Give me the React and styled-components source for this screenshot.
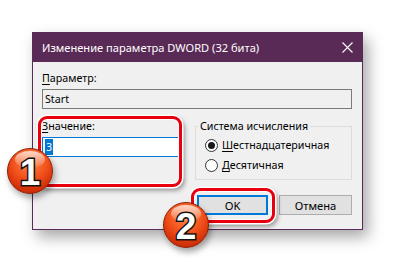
import React from "react";
import styled, { createGlobalStyle } from "styled-components";

const Global = createGlobalStyle`
  html, body { margin: 0; padding: 0; background: #fff; }
  body { font-family: "Segoe UI", "Noto Sans", "Liberation Sans", sans-serif; }
  * { box-sizing: border-box; }
`;

const Page = styled.div`
  position: relative;
  width: 395px;
  height: 262px;
  overflow: hidden;
  padding: 32px 0 0 32px;
  background: #fff;
`;

const Dialog = styled.div`
  width: 331px;
  height: 198px;
  border: 1px solid #5b2b57;
  background: #f0f0f0;
  box-shadow: 5px 7px 14px rgba(0, 0, 0, 0.35);
  display: flex;
  flex-direction: column;
  font-size: 10.7px;
  color: #000;
`;

const TitleBar = styled.div`
  height: 29px;
  flex: none;
  background: #5a2a56;
  color: #fff;
  display: flex;
  align-items: center;
  justify-content: space-between;
  padding-left: 9px;
  font-size: 11.1px;
`;

const CloseBtn = styled.div`
  width: 30px;
  height: 29px;
  display: flex;
  align-items: center;
  justify-content: center;
`;

const Body = styled.div`
  padding: 9px 10px 0 9px;
  display: flex;
  flex-direction: column;
`;

const Label = styled.div`
  line-height: 15px;
  height: 15px;
  white-space: nowrap;
`;

const U = styled.span`
  text-decoration: underline;
  text-underline-offset: 2px;
`;

const Field = styled.div`
  margin-top: 3px;
  height: 20px;
  border: 1px solid ${(p) => (p.$focused ? "#0078d7" : "#7a7a7a")};
  background: ${(p) => (p.$readonly ? "#f0f0f0" : "#fff")};
  display: flex;
  align-items: center;
  padding-left: 2px;
  line-height: 16px;
`;

const Selected = styled.span`
  background: #0078d7;
  color: #fff;
  padding: 0 1px;
  line-height: 16px;
`;

const Row = styled.div`
  margin-top: 10px;
  display: flex;
  gap: 16px;
`;

const ValueCol = styled.div`
  position: relative;
  width: 137px;
  flex: none;
`;

const Ring = styled.div`
  position: absolute;
  top: ${(p) => p.$t}px;
  left: ${(p) => p.$l}px;
  right: ${(p) => p.$r}px;
  bottom: ${(p) => p.$b}px;
  border: 3px solid #e8000f;
  border-radius: 9px;
  box-shadow: 0 0 0 1.5px #fff, inset 0 0 0 1px #fff, 2px 3px 4px 1px rgba(0, 0, 0, 0.35);
  pointer-events: none;
`;

const Group = styled.fieldset`
  margin: 0;
  padding: 5px 0 6px 9px;
  width: 157px;
  height: 61px;
  border: 1px solid #dcdcdc;
  display: flex;
  flex-direction: column;
  gap: 7px;
`;

const Legend = styled.legend`
  padding: 0 2px;
  margin-left: -7px;
  line-height: 15px;
`;

const RadioRow = styled.div`
  display: flex;
  align-items: center;
  gap: 4px;
  height: 13px;
  line-height: 15px;
`;

const RadioCircle = styled.span`
  width: 13px;
  height: 13px;
  border-radius: 50%;
  border: 1px solid #333;
  background: #fff;
  display: flex;
  align-items: center;
  justify-content: center;
  &::after {
    content: "";
    width: 7px;
    height: 7px;
    border-radius: 50%;
    background: ${(p) => (p.$checked ? "#1a1a1a" : "transparent")};
  }
`;

const Buttons = styled.div`
  margin-top: 15px;
  display: flex;
  justify-content: flex-end;
  gap: 11px;
`;

const BtnWrap = styled.div`
  position: relative;
`;

const Button = styled.div`
  width: ${(p) => p.$w}px;
  height: 20px;
  background: #e1e1e1;
  border: ${(p) => (p.$default ? "2px solid #0078d7" : "1px solid #adadad")};
  display: flex;
  align-items: center;
  justify-content: center;
  font-size: 11.2px;
`;

const Badge = styled.div`
  position: absolute;
  left: ${(p) => p.$x}px;
  top: ${(p) => p.$y}px;
  width: 46px;
  height: 46px;
  border-radius: 50%;
  border: 1px solid #8a1d02;
  background: radial-gradient(circle at 50% 30%, #ff8a4a 0%, #f2511b 45%, #d8340b 70%, #a8220a 100%);
  box-shadow: 2px 4px 6px rgba(0, 0, 0, 0.35);
  display: flex;
  align-items: center;
  justify-content: center;
  overflow: hidden;
  &::before {
    content: "";
    position: absolute;
    left: 7px;
    top: 2px;
    width: 30px;
    height: 17px;
    border-radius: 50%;
    background: linear-gradient(to bottom, rgba(255, 255, 255, 0.75), rgba(255, 255, 255, 0.05));
  }
`;

const BadgeNum = styled.span`
  position: relative;
  font-family: "Liberation Sans", Arial, sans-serif;
  font-weight: 700;
  font-size: 37px;
  line-height: 1;
  color: #fff;
  -webkit-text-stroke: 3px #111;
  paint-order: stroke fill;
  margin-top: 2px;
`;

export default function App() {
  return (
    <>
      <Global />
      <Page>
        <Dialog>
          <TitleBar>
            <span>Изменение параметра DWORD (32 бита)</span>
            <CloseBtn>
              <svg width="11" height="11" viewBox="0 0 11 11">
                <path d="M0.5 0.5 L10.5 10.5 M10.5 0.5 L0.5 10.5" stroke="#fff" strokeWidth="1.1" />
              </svg>
            </CloseBtn>
          </TitleBar>
          <Body>
            <Label>
              <U>П</U>араметр:
            </Label>
            <Field $readonly>Start</Field>
            <Row>
              <ValueCol>
                <Label>
                  <U>З</U>начение:
                </Label>
                <Field $focused>
                  <Selected>3</Selected>
                </Field>
                <Ring $t={-3} $l={-4} $r={-3} $b={-7} />
              </ValueCol>
              <Group>
                <Legend>Система исчисления</Legend>
                <RadioRow>
                  <RadioCircle $checked />
                  <span>
                    <U>Ш</U>естнадцатеричная
                  </span>
                </RadioRow>
                <RadioRow>
                  <RadioCircle />
                  <span>
                    <U>Д</U>есятичная
                  </span>
                </RadioRow>
              </Group>
            </Row>
            <Buttons>
              <BtnWrap>
                <Button $w={71} $default>OK</Button>
                <Ring $t={-7} $l={-6} $r={-7} $b={-8} />
              </BtnWrap>
              <Button $w={73}>Отмена</Button>
            </Buttons>
          </Body>
        </Dialog>
        <Badge $x={7} $y={148}>
          <BadgeNum>1</BadgeNum>
        </Badge>
        <Badge $x={163} $y={202}>
          <BadgeNum>2</BadgeNum>
        </Badge>
      </Page>
    </>
  );
}
